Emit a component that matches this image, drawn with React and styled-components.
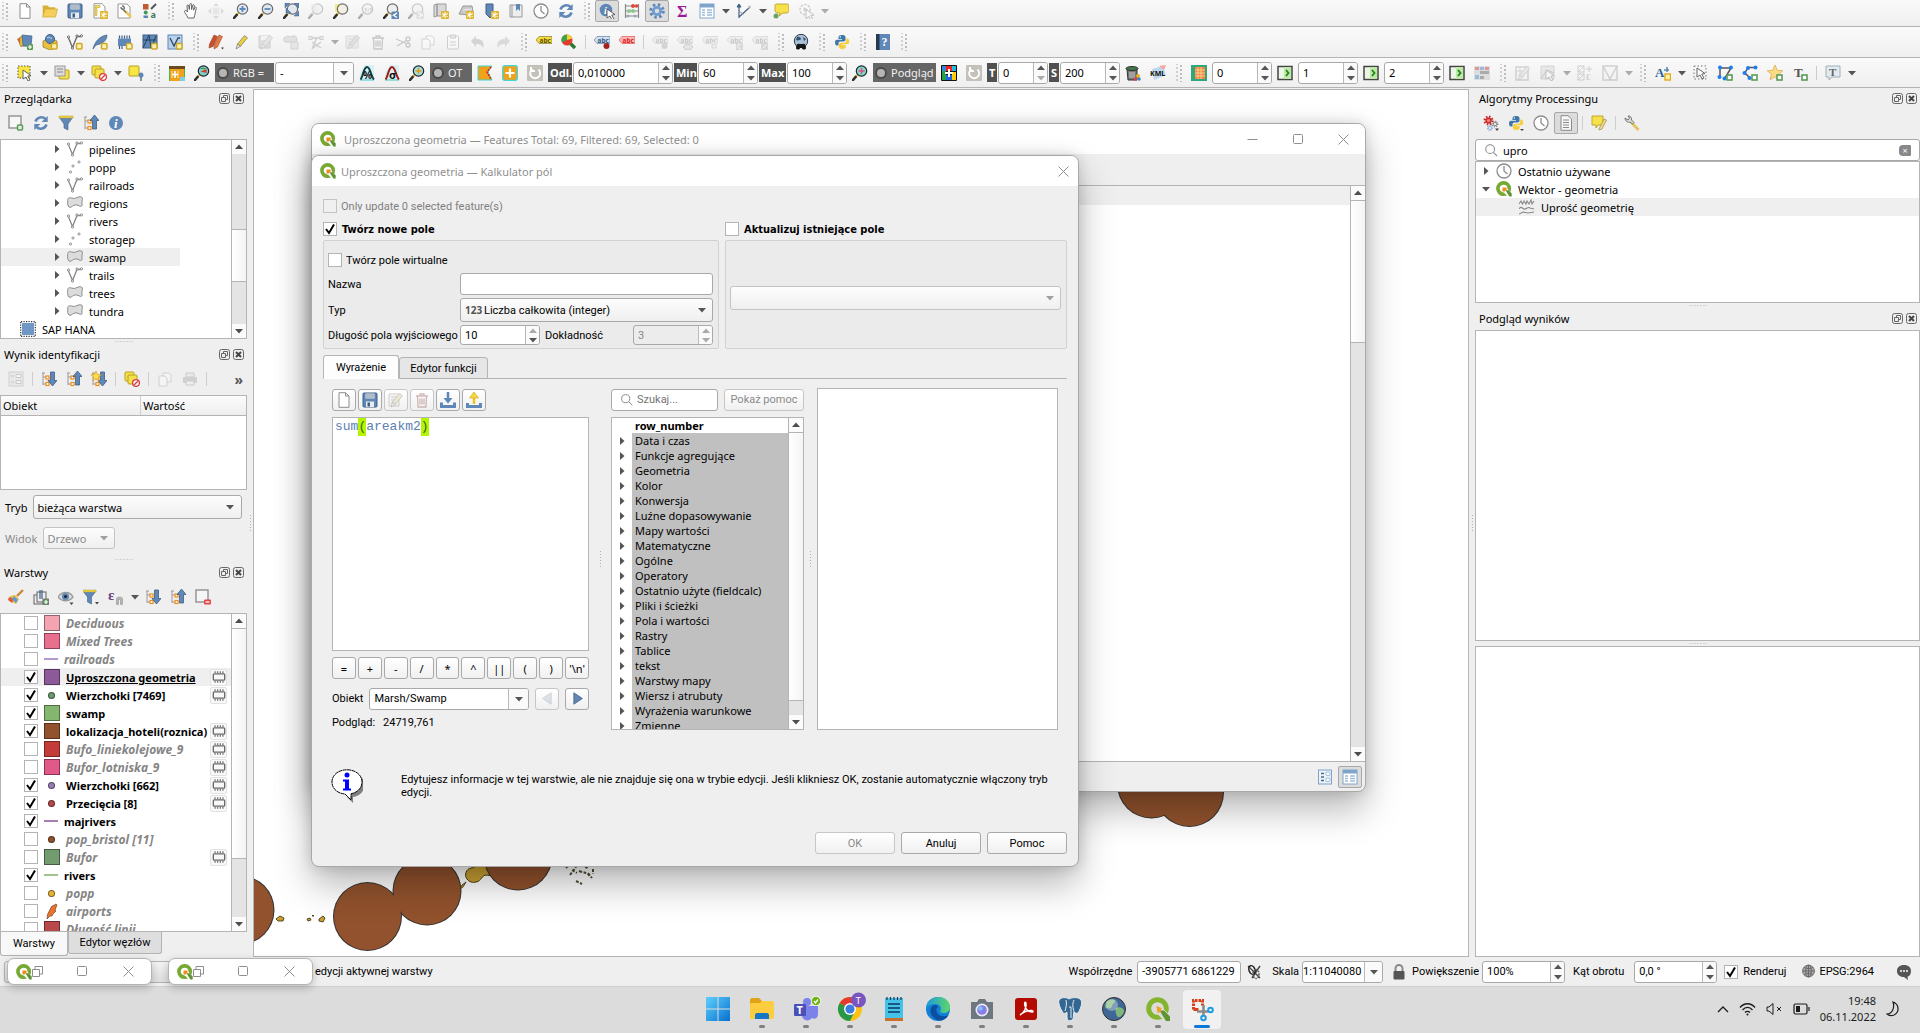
import React from "react";
import styled, { createGlobalStyle, css } from "styled-components";

/* ---------- shared values ---------- */
const UI = `"Noto Sans", "Open Sans", sans-serif`;
const DLG = `Roboto, "Noto Sans", sans-serif`;
const LINE = "#b4b4b4";
const FACE = "#efefef";

const Global = createGlobalStyle`
  *, *::before, *::after { box-sizing: border-box; }
  body { margin: 0; background: #dcdcdc; }
  button, input, select, textarea { font: inherit; color: inherit; margin: 0; }
  button { padding: 0; }
  svg { display: block; flex: none; }
`;

/* ---------- 16 px icon drawings ---------- */
const B = "#5f88b8";
const BD = "#3f5f85";
const PlusBadge = ({ x = 10, y = 10 }) => (
  <g transform={`translate(${x} ${y})`}>
    <rect x="0" y="0" width="6" height="6" rx="1" fill="#5b9b57" />
    <path d="M3 1v4M1 3h4" stroke="#fff" strokeWidth="1.2" />
  </g>
);
const StarBadge = ({ x = 8, y = 8 }) => (
  <g transform={`translate(${x} ${y})`}>
    <rect width="8" height="8" rx="1" fill="#dfb72c" />
    <path d="M4 1v6M1.300 2.500l5.400 3M6.700 2.500L1.300 5.500" stroke="#fff" strokeWidth="1.100" />
  </g>
);
const BoxBadge = () => <rect x="9.5" y="9.5" width="5.500" height="5.500" rx="1" fill="#fdf3b0" stroke="#cfa62a" strokeWidth="1.500" />;
const Glass = ({ fill = "#eef1f3", ring = "#6d6d6d", children }) => (
  <g>
    <path d="M6 9.5L2.500 13" stroke="#e3c04a" strokeWidth="2.400" />
    <path d="M3.600 12L1 15" stroke="#2f2f2f" strokeWidth="2.600" strokeLinecap="round" />
    <circle cx="9.500" cy="6" r="5.200" fill={fill} stroke={ring} strokeWidth="1.200" />
    {children}
  </g>
);
const Pages = ({ fill = "#fff" }) => (
  <g fill={fill} stroke="#999" strokeWidth="1">
    <path d="M6 2h6l2 2v7H6z" />
    <path d="M2 5h6l2 2v8H2z" />
  </g>
);
const Abc = ({ fill, color = "#333" }) => (
  <g>
    <path d="M0 6l3-3.500h13v7H3z" fill={fill} stroke={color} strokeWidth=".5" />
    <text x="3.500" y="8.600" fontFamily="Noto Sans" fontSize="6.500" fontWeight="700" fill={color}>abc</text>
  </g>
);
const TreeLines = () => (
  <g>
    <path d="M1 2h3M2 2v12M2 6h4M2 13h4" stroke="#999" fill="none" />
    <rect x="5" y="5" width="3" height="3" fill="#fff" stroke="#f08c1a" strokeWidth="1.2" />
    <rect x="5" y="11.500" width="3" height="3" fill="#fff" stroke="#f08c1a" strokeWidth="1.2" />
  </g>
);
const VLine = ({ c = "#888" }) => (
  <g fill="#fff" stroke={c} strokeWidth="1">
    <path d="M1.500 4l4 9.500L10 2.500h4" fill="none" strokeWidth="1.300" />
    <circle cx="1.500" cy="3" r="1.100" />
    <circle cx="5.500" cy="14" r="1.100" />
    <circle cx="10" cy="2" r="1.100" />
    <circle cx="14.500" cy="1.800" r="1.100" />
  </g>
);
const Poly = () => <path d="M.7 5.500C.7 2.500 2.500 2.300 4.500 3c2 .7 3.500.5 5.500-.5 2.200-1 5-1.200 5.300.5.300 2-.8 4-.3 6.500.4 2-1 2.300-2.500 1.500C10.500 10 8.500 9.300 6.500 10.500c-1.500.9-3 2.500-4.500 1.500C.3 10.700.7 8 .7 5.500z" fill="#dcdcdc" stroke="#8a8a8a" />;
const Chip = ({ c = "#666" }) => (
  <g stroke={c} fill="none">
    <rect x="1.500" y="4.500" width="13" height="7" rx="1" strokeWidth="1.500" />
    <path d="M3.500 1.500v2M6.500 1.500v2M9.500 1.500v2M12.500 1.500v2M3.500 12.500v2M6.500 12.500v2M9.500 12.500v2M12.500 12.500v2" strokeWidth="1.300" />
  </g>
);
const Gear = ({ cx, cy, r, fill, hole = "#fff" }) => (
  <g>
    <circle cx={cx} cy={cy} r={r} fill="none" stroke={fill} strokeWidth={r * 0.65} strokeDasharray={`${r * 0.4} ${r * 0.385}`} />
    <circle cx={cx} cy={cy} r={r * 0.62} fill={hole} stroke={fill} strokeWidth={r * 0.4} />
  </g>
);
const Python = () => (
  <g>
    <path d="M8 1c-3 0-3.500 1-3.500 2.500V5H8v.7H3C1.500 5.700 1 7 1 8.500s.5 3 2 3h1.500V9.500C4.500 8 5.500 7.500 7 7.500h2.500c1 0 2-.5 2-1.700V3.300C11.500 1.500 10 1 8 1z" fill="#3f78a8" />
    <path d="M8.200 15c3 0 3.500-1 3.500-2.500V11H8.200v-.7h5c1.500 0 2-1.300 2-2.800s-.5-3-2-3h-1V6.800c0 1.300-1 2-2.200 2H7.200c-1.200 0-2.200.7-2.200 1.700v2.200C5 14.500 6.200 15 8.200 15z" fill="#f6cf3e" />
    <circle cx="6.300" cy="3" r=".7" fill="#fff" />
  </g>
);
const Globe = ({ fill = "#bcd0e4", s = "#40566e" }) => (
  <g fill="none" stroke={s}>
    <circle cx="8" cy="7.500" r="6.300" fill={fill} />
    <path d="M2 7.500h12M8 1.200v12.600M3.500 3.800c3 1.600 6 1.600 9 0M3.500 11.200c3-1.600 6-1.600 9 0" />
    <ellipse cx="8" cy="7.500" rx="3" ry="6.300" />
  </g>
);
const Qgis = () => (
  <g>
    <circle cx="7.600" cy="7.600" r="5.700" fill="none" stroke="#76a832" strokeWidth="3.600" />
    <path d="M8.500 8.500l6.500 6.800" stroke="#fff" strokeWidth="5" />
    <path d="M9.500 9.200h3.200l3 3.200v3.100h-2.300z" fill="#5f9430" />
    <path d="M6.500 6.500h4v2L8.800 10.400H6.500z" fill="#f08a1f" />
  </g>
);
const Arrow = ({ up, x = 8 }) => (
  <path
    transform={`translate(${x} 0)`}
    d={up ? "M3.500 0L8 5.500H5.500V14h-4V5.500H-1z" : "M3.500 15L8 9.500H5.500V1h-4v8.500H-1z"}
    fill={B} stroke={BD} strokeWidth=".8"
  />
);
const Nodes = ({ pts }) => pts.map(([x, y], i) => <circle key={i} cx={x} cy={y} r="2" fill="#1f7df0" />);
const GreenPlus = () => <rect x="10" y="10" width="5" height="5" fill="#fff" stroke="#5b9b57" strokeWidth="1.600" />;
const Cursor = ({ x = 6, y = 5 }) => <path transform={`translate(${x} ${y})`} d="M0 0l8 5.500-3.300.6L7 10l-2 1-2-4L0 9z" fill="#fff" stroke="#555" strokeWidth=".9" />;
const Curve = ({ c, children }) => (
  <g fill="none">
    <path d="M1 15V8l5-8h9v15z" fill="#c9f0f0" opacity=".7" />
    <path d="M1 15h14" stroke="#7fd6d6" strokeWidth="1.500" />
    <path d="M1.500 14.500C4 12 4.500 2 8 2s4 10 7 12.500" stroke={c} strokeWidth="2" />
    {children}
  </g>
);
const Pencil = ({ c = "#e8cf3a", s = "#777" }) => (
  <g>
    <path d="M4.500 10L11.500 1.500l3 2.300L7.500 12.300z" fill={c} stroke={s} strokeWidth=".7" />
    <path d="M4.500 10l3 2.300L3 15z" fill="#eee0c0" stroke={s} strokeWidth=".7" />
  </g>
);

const ICONS = {
  page: <path d="M3 .7h6.500L13 4v11.300H3zM9.500.7V4H13" fill="#fff" stroke="#8d8d8d" />,
  folder: <g><path d="M.7 13V2.500h5l1.500 1.800h6V13z" fill="#d9b13a" /><path d="M.7 14L3 6h12.500l-2 8z" fill="#f5cf5a" stroke="#cfa42c" strokeWidth=".7" /></g>,
  save: <g><rect x="1" y="1" width="14" height="14" rx="1" fill={B} stroke={BD} /><rect x="3.500" y="1.500" width="9" height="5" fill="#d9dfe6" /><path d="M4 3h8M4 5h8" stroke="#8b98a8" /><rect x="4" y="9.500" width="8" height="5.500" fill="#e8ecef" /><rect x="5.500" y="10.500" width="2.500" height="4" fill={BD} /></g>,
  printNew: <g><path d="M2 .7h8L13 4v11H2z" fill="#fff" stroke="#999" /><path d="M3 2.500h5v2H3zM3 5.500h2v7H3z" fill="#f1d75c" stroke="#c7a72c" strokeWidth=".6" /><StarBadge /></g>,
  layouts: <g><path d="M1 1h9l3 3v11H1z" fill="#fff" stroke="#999" /><path d="M8 8l6 6" stroke="#e8c95a" strokeWidth="2.500" /><path d="M5 5.500l4 4M4 4c0 2 2 3 3 2s0-3-2-3" stroke="#777" strokeWidth="1.500" fill="none" /></g>,
  styles: <g><rect x="1" y="1" width="5.500" height="5.500" fill="#c05b33" /><circle cx="3.700" cy="9.500" r="2" fill="#3f9a57" /><path d="M9 6l5-5" stroke="#555" strokeWidth="2" /><path d="M1.500 12.500h4.500V15h-4.500z" fill="#5d85b5" /><text x="8.500" y="14.500" fontFamily="Noto Sans" fontWeight="700" fontSize="9" fill="#3f7a50">a</text></g>,
  hand: <path d="M5 15c-1-3-3.500-5-3.500-6.500S3.500 7 4.500 9L4 3c0-1.500 1.600-1.500 1.800 0l.5 3.500L6.800 1.500c.2-1.500 1.700-1.500 1.800 0v5l1-4c.4-1.300 1.900-1 1.700.4l-.8 4.300 1.300-2.500c.6-1.100 2-.4 1.500.8-.9 2.500-1.300 6-2.300 9.500z" fill="#fff" stroke="#555" strokeWidth=".9" />,
  panSel: <g fill="#aaa"><path d="M8 0l3 3H5zM8 16l3-3H5zM0 8l3-3v6zM16 8l-3-3v6z" /><rect x="4.500" y="4.500" width="7" height="7" fill="#ddd28a" /></g>,
  zoomIn: <Glass fill="#dfe8f3"><path d="M9.500 3v6M6.500 6h6" stroke={B} strokeWidth="1.800" /></Glass>,
  zoomOut: <Glass fill="#dfe8f3"><path d="M6.500 6h6" stroke={B} strokeWidth="1.800" /></Glass>,
  zoomFull: <g><Glass fill="#dfe8f3" /><path d="M2 0h5L2 5zM16 0h-5l5 5zM16 13h-5l5-5zM3 10V5l5 5z" fill={B} stroke={BD} strokeWidth=".5" /></g>,
  zoomSel: <g><Glass fill="#efe9b8" /><path d="M3 1h6v7H3z" fill="#e8dd80" opacity=".6" /></g>,
  zoomLayer: <g><path d="M2 1h6v8H2z" fill="#f4e98a" /><Glass fill="#f3efe2" /></g>,
  zoomNative: <Glass fill="#eee"><text x="6" y="8.500" fontSize="6" fontFamily="Noto Sans" fontWeight="700" fill="#777">1:1</text></Glass>,
  zoomLast: <g><Glass fill="#eee" /><rect x="8.500" y="8.500" width="7.500" height="7.500" fill={B} /><path d="M14 10l-3.500 2.300L14 14.500" stroke="#fff" fill="none" strokeWidth="1.400" /></g>,
  zoomNext: <g><Glass fill="#eee" /><rect x="8.500" y="8.500" width="7.500" height="7.500" fill="#bbb" /><path d="M10.500 10l3.500 2.300-3.500 2.200" stroke="#fff" fill="none" strokeWidth="1.400" /></g>,
  mapNew: <g><path d="M1 2l3-1v12l-3 1zM4 1h9v12H4z" fill="#d9d9d9" stroke="#999" /><StarBadge /></g>,
  map3d: <g><path d="M1 11L5 3h9l1 6-4 3z" fill="#c9c9c9" stroke="#999" /><path d="M5 7l9-1" stroke="#eee" /><StarBadge /></g>,
  bookNew: <g><path d="M3 1h7v10l-3 4-4-4z" fill={B} stroke={BD} /><StarBadge /></g>,
  book: <g><path d="M2 2h12v12H2z" fill="#eee" stroke="#999" /><path d="M8 1h4v7l-2-2-2 2z" fill={B} /><path d="M4 2v12" stroke="#999" /></g>,
  clock: <g><circle cx="8" cy="8" r="7" fill="#fff" stroke="#8d8d8d" strokeWidth="1.300" /><path d="M8 3v5l3.500 3" fill="none" stroke="#8d8d8d" strokeWidth="1.300" /></g>,
  refresh: <g fill="none" stroke={B} strokeWidth="2.600"><path d="M2.500 6.500c1.500-4.500 7-5.500 10-2.500" /><path d="M13.500 9.500c-1.500 4.500-7 5.500-10 2.500" /><path d="M14.700 1v6H8.500zM1.300 15V9h6.200z" fill={B} stroke="none" /></g>,
  identify: <g><circle cx="7" cy="7" r="6.300" fill={B} /><text x="5" y="11" fontFamily="Liberation Serif" fontStyle="italic" fontWeight="700" fontSize="11" fill="#fff">i</text><Cursor x={8} y={6} /></g>,
  abacus: <g stroke="#888"><path d="M1.500 1v14M14.500 1v14M1.500 3h13M1.500 8h13M1.500 13h13" strokeWidth="1.200" /><g stroke="none"><circle cx="9" cy="3" r="2" fill="#dc4b3e" /><circle cx="12.500" cy="3" r="1.800" fill="#dc4b3e" /><circle cx="5" cy="8" r="2" fill="#8cc88f" /><circle cx="9" cy="8" r="2" fill="#8cc88f" /><circle cx="4" cy="13" r="1.500" fill="#9ab" /><circle cx="11" cy="13" r="1.500" fill="#9ab" /></g></g>,
  gear: <g><circle cx="8" cy="8" r="6.300" fill="none" stroke={B} strokeWidth="3" strokeDasharray="2.500 2.450" /><circle cx="8" cy="8" r="3.700" fill="#dcdcdc" stroke="#6f9bd0" strokeWidth="2.800" /></g>,
  sigma: <text x="3" y="13.500" fontFamily="Liberation Serif" fontWeight="700" fontSize="16" fill="#9a1a9a">Σ</text>,
  table: <g><rect x="1" y="1" width="14" height="14" fill="#fff" stroke="#7ea4cc" /><path d="M1 1h14v3.500H1z" fill="#7ea4cc" /><path d="M3 7h3M8 7h5M3 9.500h3M8 9.500h5M3 12h3M8 12h5" stroke="#9fbcd8" strokeWidth="1.400" /></g>,
  form: <g><rect x="1.500" y="1" width="13" height="14" fill="#eaf2fa" stroke="#7ea4cc" /><path d="M4 4.500h3M4 8h3M4 11.500h3" stroke="#56697e" strokeWidth="1.400" /><rect x="9" y="3" width="4" height="3.500" rx="1" fill="#fff" stroke="#9fbcd8" /><rect x="9" y="9" width="4" height="3.500" rx="1" fill="#fff" stroke="#9fbcd8" /></g>,
  measure: <g fill="none"><path d="M3 2v13M3 14l10-9" stroke={BD} strokeWidth="1.200" /><path d="M1 4l2-3 2 3z" fill={BD} stroke={BD} /><circle cx="13.500" cy="4" r="1.500" fill="#bbb" /><path d="M3 9c3 0 4 2 4 3" stroke="#999" /></g>,
  tip: <g><path d="M3 1h11c2 0 2 1 2 3v3c0 2-1 3-3 3h-3l-4 3 1-3H5C3 10 2 9 2 7V3c0-1 0-2 1-2z" fill="#f6e04c" stroke="#b49a25" strokeWidth=".8" /><circle cx="3" cy="13" r="2.500" fill="#6ba45c" /></g>,
  action: <g><circle cx="7" cy="6.500" r="5" fill="#fff" stroke="#888" strokeWidth="1.600" strokeDasharray="2.500 1.200" /><path d="M5.500 4l4.500 2.500L5.500 9z" fill="#888" /><Cursor x={8} y={6.500} /></g>,

  dsManager: <g><path d="M0 5l5-3 4 8-5 3z" fill="#d7703a" /><path d="M3 3h7v9H3z" fill="#e9c13e" stroke="#97731b" strokeWidth=".5" /><path d="M5 1l10 1-1 10H6z" fill={B} stroke={BD} strokeWidth=".7" /><PlusBadge /></g>,
  gpkg: <g><path d="M1 7l7-3 7 3v6l-7 3-7-3z" fill="#e9c13e" stroke="#97731b" strokeWidth=".7" /><circle cx="8" cy="5" r="4.500" fill={B} stroke={BD} /><path d="M5 4c2-2 3 1 5 0" stroke="#cfe0ee" fill="none" /><BoxBadge /></g>,
  vecNew: <g><VLine c="#666" /><BoxBadge /></g>,
  feather: <g><path d="M1 15C3 7 8 2 15 1c0 6-5 9-11 10z" fill={B} stroke={BD} strokeWidth=".7" /><BoxBadge /></g>,
  chipNew: <g><rect x="1" y="4.500" width="13" height="7.500" fill={B} /><path d="M2.500 1.500v3M5 1.500v3M7.500 1.500v3M10 1.500v3M12.500 1.500v3M2.500 12v3M5 12v3" stroke={BD} strokeWidth="1.200" /><BoxBadge /></g>,
  meshNew: <g><rect x="1" y="1" width="14" height="13" fill={B} stroke={BD} /><path d="M1 14L7 1l2 13L14 2M1 6h13" stroke="#24405f" fill="none" /><BoxBadge /></g>,
  vBox: <g><rect x="1" y="1" width="14" height="14" fill="#b9d2ec" stroke={B} /><path d="M3 4l4 8 4-8h2" stroke="#33475c" fill="none" strokeWidth="1.300" /><BoxBadge /></g>,
  pencils: <g><path d="M1.500 10L6 1l3.500 1.500L5 12.500 1 14z" fill="#c94f32" stroke="#8a3a1a" strokeWidth=".5" /><path d="M6 11l5-10 3.500 1.500L9.500 13 6 15z" fill="#e07b45" stroke="#8a3a1a" strokeWidth=".5" /><path d="M13 13.500h3l-1.500 2z" fill="#444" /></g>,
  pencil: <Pencil />,
  saveEdit: <g><path d="M1 2h11v12H1z" fill="#bbb" stroke="#888" /><path d="M3 2h7v4H3z" fill="#eee" /><Pencil c="#ccc" /></g>,
  polyNew: <g><path d="M1 4c4-4 6 0 9-2 4-1 5 4 3 6H3C1 8 0 6 1 4z" fill="#bbb" stroke="#888" /><path d="M8 8h7v7H8z" fill="#ccc" stroke="#999" /></g>,
  vertex: <g fill="none" stroke="#888"><path d="M1 4h12M4 15L9 3M4 8l9 6M13 8l-8 6" strokeWidth="1.500" /><rect x="1" y="2.500" width="3" height="3" fill="#ddd" /><rect x="12" y="2.500" width="3" height="3" fill="#ddd" /></g>,
  multiEdit: <g><path d="M1 2h12v12H1z" fill="#ddd" stroke="#aaa" /><path d="M3 5h7M3 8h7M3 11h5" stroke="#aaa" /><Pencil c="#bbb" /></g>,
  trash: <path d="M2 4h12M6 4V2h4v2M3.500 4l.5 11h8l.5-11M6 6.500v6M8 6.500v6M10 6.500v6" fill="none" stroke="#a06a6a" strokeWidth="1.300" />,
  cut: <g fill="none" stroke="#777" strokeWidth="1.300"><circle cx="13" cy="5" r="2" /><circle cx="13" cy="11" r="2" /><path d="M11.500 6.500L2 12M11.500 9.500L1 5" /></g>,
  copy: <Pages />,
  paste: <g fill="#fff" stroke="#888"><rect x="2.500" y="2" width="11" height="13" rx="1" /><path d="M5.500 1h5v3h-5z" fill="#ccc" /><path d="M5 8h6M5 11h6" /></g>,
  undo: <path d="M1 7l5-5v3c6 0 9 3 7 9-1-3-3-4-7-4v3z" fill="#999" />,
  redo: <path d="M15 7l-5-5v3c-6 0-9 3-7 9 1-3 3-4 7-4v3z" fill="#aaa" />,
  abcYellow: <Abc fill="#f3dd3c" color="#5f520a" />,
  abcPie: <g><path d="M9 9l5 5" stroke="#2a7a35" strokeWidth="3.500" /><circle cx="6" cy="6" r="5.500" fill="#e33b2c" /><path d="M6 6V.5A5.500 5.500 0 0 0 1 8.500z" fill="#3aa44b" /><path d="M6 6V.5a5.500 5.500 0 0 1 5.300 4z" fill="#efd52f" /></g>,
  abcPin: <g><Abc fill="#cfe0f2" color="#36587e" /><circle cx="12.500" cy="12" r="3" fill="#a3231f" /></g>,
  abcRed: <Abc fill="#f7b7b7" color="#e02020" />,
  abcGrayPin: <g><Abc fill="#ddd" color="#777" /><circle cx="12.500" cy="12" r="3" fill="#999" /></g>,
  abcEye: <g><Abc fill="#ddd" color="#777" /><ellipse cx="11" cy="13" rx="4.500" ry="2.500" fill="#ccc" stroke="#888" /></g>,
  abcMove: <g><Abc fill="#ddd" color="#777" /><path d="M9 9h6v6H9zM10 12h4M12 10v4" fill="#aaa" stroke="#eee" /></g>,
  abcRot: <g><Abc fill="#ddd" color="#777" /><rect x="9" y="9" width="7" height="7" fill="#aaa" /><path d="M14 11a2 2 0 1 0 0 3" stroke="#fff" fill="none" /></g>,
  abcEdit: <g><Abc fill="#ddd" color="#777" /><rect x="9" y="9" width="7" height="7" fill="#aaa" /><path d="M10.500 14.500l4-4" stroke="#fff" /></g>,
  globeFind: <g><circle cx="8" cy="7" r="6.700" fill="#a9bfd4" stroke="#2e3c4c" /><path d="M4 3c2-1 4 1 4 2S4 7 3 6zM10 3l3 2-2 2z" fill="#33516f" /><path d="M3 14c0-4 2-5 3.500-4h3C11 9 13 10 13 14c0 2-4 2-4 0H7c0 2-4 2-4 0z" fill="#151515" /></g>,
  python: <Python />,
  help: <g><rect x="1" y="0" width="14" height="16" fill={B} /><path d="M1 0h3.500v16H1z" fill="#26384e" /><text x="6.500" y="12" fontFamily="Liberation Serif" fontWeight="700" fontSize="12" fill="#fff">?</text></g>,

  selArea: <g><rect x="1" y="1" width="12" height="12" fill="#f8e645" stroke="#555" strokeDasharray="1.500 1.500" /><Cursor x={6} y={5} /></g>,
  selForm: <g><rect x="5" y="5" width="10" height="9" rx="1" fill="#f4e04a" stroke="#b8a020" /><rect x="1" y="1" width="10" height="10" fill="#ddd" stroke="#999" /><path d="M3 4h6M3 7h6" stroke="#888" /></g>,
  deselect: <g><rect x="1" y="1" width="9" height="9" rx="1" fill="#f4e04a" stroke="#b8a020" /><rect x="4" y="4" width="9" height="9" rx="1" fill="#f4e04a" stroke="#b8a020" /><circle cx="12" cy="12" r="3.400" fill="#fff" stroke="#dc3b3b" strokeWidth="1.300" /><path d="M10 14l4-4" stroke="#dc3b3b" strokeWidth="1.300" /></g>,
  selPin: <g><rect x="1" y="1" width="10" height="10" rx="1" fill="#f8e645" stroke="#b8a020" /><circle cx="13" cy="10" r="2.500" fill={B} /><path d="M13 12v4" stroke={BD} strokeWidth="1.300" /></g>,
  scpBand: <g><rect x="0" y="2" width="16" height="14" fill="#49b34a" /><path d="M0 1h16v3H0z" fill="#6a4a20" /><path d="M1 4h14v9l-3 1v2H1z" fill="#efa21a" /><path d="M11 12h5v4h-5z" fill="#7ad0e8" /><path d="M6 6v7M3 9.500h6" stroke="#fff" strokeWidth="1.600" /><path d="M3 6v7M9 6v7" stroke="#fff" strokeWidth=".7" /></g>,
  scpZoom: <Glass fill="#7cd0c8" ring="#223"><path d="M6 4c2-2 5-1 7 0z" fill="#3a9a4a" /><path d="M6.500 6.500l6-2.500v4z" fill="#d83a2b" /></Glass>,
  curvePct: <Curve c="#12414a"><text x="4" y="14" fontFamily="Noto Sans" fontWeight="700" fontSize="10" fill="#111">%</text></Curve>,
  curveSig: <Curve c="#a31a1a"><text x="5" y="14" fontFamily="Noto Sans" fontWeight="700" fontSize="11" fill="#111">σ</text></Curve>,
  scpZoomPlus: <Glass fill="#9fe0e0" ring="#223"><path d="M9.500 3v6M6.500 6h6" stroke="#e79a1a" strokeWidth="1.600" /></Glass>,
  roiPoly: <g><path d="M1 1h14l-4 6 4 8H1z" fill="#efa21a" stroke="#3fd6d6" /><path d="M14 2l-4 5 4 7" stroke="#d22" strokeWidth="1.600" fill="none" strokeDasharray="2 1" /></g>,
  roiPlus: <g><rect x=".7" y=".7" width="14.600" height="14.600" rx="2" fill="#efa21a" stroke="#3fd6d6" strokeWidth="1.300" /><path d="M8 3.500v9M3.500 8h9" stroke="#fff" strokeWidth="2.200" /></g>,
  redoBox: <g><rect width="16" height="16" rx="1" fill="#c4c1bb" /><path d="M11.500 4.500a5 5 0 1 1-6-.5M4 2v4h4" stroke="#fff" strokeWidth="1.900" fill="none" /></g>,
  pvZoom: <Glass fill="#7fd9c0" ring="#223"><path d="M9.500 3v6M6.500 6h6" stroke="#e04d8a" strokeWidth="1.400" /></Glass>,
  pvCross: <g><rect width="16" height="16" rx="1" fill="#111" /><rect x="1" y="1" width="4" height="14" fill="#25a04a" /><rect x="1" y="1" width="4" height="5" fill="#38d" /><rect x="5" y="1" width="6" height="5" fill="#e22" /><rect x="11" y="1" width="4" height="5" fill="#2bd" /><rect x="5" y="10" width="6" height="5" fill="#26d" /><rect x="11" y="7" width="4" height="8" fill="#fc0" /><path d="M8 4v8M4 8h8" stroke="#fff" strokeWidth="2" /></g>,
  bin: <g><path d="M2 4h10v11H3z" fill="#777" stroke="#333" /><ellipse cx="7" cy="3.500" rx="6" ry="2" fill="#3f7a4a" stroke="#333" /><path d="M5 7v6M7 7v6M9 7v6" stroke="#ccc" /><circle cx="13" cy="11" r="2" fill="#efb020" /><circle cx="10.500" cy="14" r="1.800" fill="#d44" /><circle cx="14" cy="14" r="1.800" fill="#38c" /></g>,
  kml: <g><path d="M2 4l11-3 3 9-12 5z" fill="#bcd8ee" /><path d="M9 1l7-1-2 5z" fill="#f2a8a0" /><text x="0" y="11" fontFamily="Noto Sans" fontWeight="700" fontSize="7" fill="#111">KML</text></g>,
  roiGrid: <g><rect width="16" height="16" fill="#2ea77a" /><path d="M4 2h10v12H4z" fill="#f4863c" /><path d="M4 5h10M4 8h10M4 11h10M7 2v12M10 2v12" stroke="#fbd9a8" strokeWidth=".8" /></g>,
  goBox: <g><rect x="1" y="1.500" width="14" height="13" fill="#eaf7e4" stroke="#444" strokeWidth="1.500" /><path d="M7 2h7v12H7z" fill="#bfe8a8" /><path d="M9 5l2.500 3L9 11" stroke="#178a17" strokeWidth="1.800" fill="none" /></g>,
  mosaic: <g><path d="M0 1h16v14H0z" fill="#ddd" /><path d="M1 2h4v3H1zM11 2h4v3h-4z" fill="#d99" /><path d="M6 2h4v3H6zM1 10h4v4H1z" fill="#9bd" /><path d="M6 6h9v3H6zM6 11h4v3H6z" fill="#aaa" /></g>,
  dig1: <g><rect x="1" y="2" width="12" height="13" fill="none" stroke="#888" strokeWidth="1.400" /><path d="M1 6h12M5 2v13" stroke="#999" /><Pencil c="#ccc" /></g>,
  dig2: <g><path d="M1 1h13v13H1z" fill="#ccc" stroke="#999" /><path d="M1 14l6-9 7 3" stroke="#777" fill="none" /><Cursor x={6} y={5} /></g>,
  dig3: <g fill="none" stroke="#888"><rect x="1" y="1" width="6" height="6" /><rect x="1" y="9" width="6" height="6" /><path d="M1 7l6-6M1 15l6-6M12 1v6M9 4h6" /><text x="9" y="15" fontSize="9" fontFamily="Liberation Serif" fontWeight="700" fill="#888" stroke="none">Ɛ</text></g>,
  dig4: <path d="M1 1h14v14H1zM1 1l7 13 7-13" fill="none" stroke="#888" strokeWidth="1.400" />,
  annText: <g><text x="0" y="12" fontFamily="Liberation Serif" fontWeight="700" fontSize="13" fill="#2f5f9a">A</text><path d="M9 5h5M12 2v5" stroke={B} strokeWidth="1.600" /><rect x="10" y="9" width="5.500" height="6" fill="#fdf3b0" stroke="#e3a81c" strokeWidth="1.400" /></g>,
  annSel: <g><rect x="2" y="1" width="12" height="13" fill="none" stroke="#777" strokeDasharray="1.500 2" /><Cursor x={5} y={3} /></g>,
  annPoly: <g><path d="M3 12L3 3h11L8 13" fill="none" stroke="#555" strokeWidth="1.500" /><Nodes pts={[[3, 2.5], [14, 2.5], [2.5, 12], [7.5, 13.5]]} /><GreenPlus /></g>,
  annLine: <g><path d="M13 2.500L6 2.500 3 8l5 5" fill="none" stroke="#555" strokeWidth="1.500" /><Nodes pts={[[13.5, 2.5], [6, 3], [2.5, 8], [7.5, 13]]} /><GreenPlus /></g>,
  annStar: <g><path d="M8 0l2.200 5.300 5.600.4-4.300 3.600 1.400 5.500L8 11.800l-4.900 3 1.400-5.500L.2 5.700l5.600-.4z" fill="#fbdc86" stroke="#e0a94a" strokeWidth=".8" /><GreenPlus /></g>,
  annT: <g><text x="2" y="12" fontFamily="Liberation Serif" fontWeight="700" fontSize="13" fill="#555">T</text><GreenPlus /></g>,
  annBubble: <g><path d="M1 1h14v11H7l-3 3v-3H1z" fill="#e3ebf0" stroke="#9fb0ba" /><text x="4" y="10.500" fontFamily="Liberation Serif" fontWeight="700" fontSize="11" fill="#666">T</text></g>,

  addLayer: <g><rect x="1" y="1" width="12" height="12" fill="#f6f6f6" stroke="#888" strokeWidth="1.300" /><rect x="9.500" y="10" width="5" height="5" rx="1" fill="#dfeedd" stroke="#5b9b57" strokeWidth="1.500" /></g>,
  filter: <g><path d="M1 2h14L10 9v6l-4-2V9z" fill={B} stroke={BD} strokeWidth=".6" /><path d="M1 1h14v2H1z" fill="#efd546" stroke="#b69e25" strokeWidth=".5" /></g>,
  collapse: <g><TreeLines /><Arrow up /></g>,
  expand: <g><TreeLines /><Arrow /></g>,
  expandNew: <g><TreeLines /><Arrow /><path d="M5 0l1.500 3.500 3.500.3-2.700 2.300.8 3.500L5 7.700 2 9.600l.7-3.500L0 3.800l3.500-.3z" fill="#fbe04a" stroke="#e39a1c" strokeWidth=".7" /></g>,
  info: <g><circle cx="8" cy="8" r="7" fill={B} /><text x="6" y="12.500" fontFamily="Liberation Serif" fontStyle="italic" fontWeight="700" fontSize="13" fill="#fff">i</text></g>,
  line: <VLine />,
  points: <g fill="#fff" stroke="#888" strokeWidth=".9"><circle cx="3.500" cy="13" r="1.100" /><circle cx="6" cy="7" r="1.100" /><circle cx="12" cy="3" r="1.100" /></g>,
  poly: <Poly />,
  sap: <g><rect x="2" y="2" width="12" height="12" fill="#6f98c6" /><path d="M1 .7h14.500M1 15.300h14.500M.7 1v14.500M15.300 1v14.500" stroke="#333" strokeWidth="1.200" strokeDasharray="1.200 1.300" /></g>,
  formView: <g><rect x="1" y="1" width="14" height="14" fill="#ddd" stroke="#999" /><path d="M3 5h3M3 11h3" stroke="#777" /><path d="M8 3.500h5v3H8zM8 9.500h5v3H8z" fill="#fff" stroke="#888" /></g>,
  print: <g><path d="M4 2h8v4H4z" fill="#ddd" stroke="#888" /><rect x="1" y="6" width="14" height="6" rx="1" fill="#999" /><path d="M4 10h8v4H4z" fill="#eee" stroke="#888" /></g>,
  brush: <g><path d="M9 7l6-6" stroke="#c98a3a" strokeWidth="2.400" /><path d="M2 7l5-1 4 4-3 5-6-3z" fill="#e9c13e" /><path d="M1 8l5 2-2 4-4-3z" fill="#e05a3a" /><path d="M6 7l4 4-2 3-4-4z" fill="#5f9ad6" /></g>,
  addGroup: <g fill="none" stroke="#777" strokeWidth="1.200"><rect x="1" y="6" width="9" height="9" /><rect x="4" y="3" width="9" height="10" fill="#eee" /><path d="M7 1v9M9 1v9" stroke={BD} /><PlusBadge /></g>,
  eye: <g><path d="M0 8c4-6 12-6 15 0-4 5-11 5-15 0z" fill="#ddd" stroke="#999" strokeWidth="1.300" /><circle cx="7.500" cy="7.500" r="3.600" fill={B} /><circle cx="7.500" cy="7.500" r="1.600" fill="#223" /><path d="M11.500 13.500h4l-2 2.500z" fill="#444" /></g>,
  filterMenu: <g><path d="M0 2h13L8.500 8v7l-4-2V8z" fill={B} stroke={BD} strokeWidth=".6" /><path d="M0 1h13v2H0z" fill="#efd546" stroke="#b69e25" strokeWidth=".5" /><path d="M12 13h4l-2 2.500z" fill="#444" /></g>,
  epsilon: <g><text x="0" y="11" fontFamily="Liberation Serif" fontWeight="700" fontSize="15" fill="#6b3f7a">ε</text><path d="M8.500 15.500V9.500q0-1.500 3-1.500t3 1.500v6h-2v-5h-2v5z" fill="#b5b5b5" stroke="#888" strokeWidth=".5" /></g>,
  removeLayer: <g><rect x="1" y="1" width="12" height="12" fill="#f6f6f6" stroke="#888" strokeWidth="1.300" /><rect x="9" y="10.500" width="7" height="5" rx="1" fill="#e04848" /><path d="M10.500 13h4" stroke="#fff" strokeWidth="1.300" /></g>,
  models: <g><Gear cx={5.5} cy={5.5} r={3.8} fill="#cf2b2b" hole="#e88" /><Gear cx={12} cy={9} r={2.6} fill="#8a8a8a" /><Gear cx={7} cy={13} r={2.4} fill="#8fb2dd" /><path d="M12 13.500h4l-2 2.500z" fill="#444" /></g>,
  pyMenu: <g><Python /><path d="M12 14h4l-2 2z" fill="#444" /></g>,
  doc: <g><path d="M3 .7h7L13.500 4v11.300H3z" fill="#f8f8f8" stroke="#888" /><path d="M5 5h6M5 7.500h6M5 10h6M5 12.500h6" stroke="#888" strokeWidth="1.200" /></g>,
  editNote: <g><path d="M1 1h11v9H7l-2 3v-3H1z" fill="#f6e04c" stroke="#c0a628" /><path d="M8 14l5-10 2.500 1-4.500 9-3 1z" fill="#efd98a" stroke="#8a7a3a" strokeWidth=".6" /></g>,
  wrench: <g><path d="M7 7l7.500 8" stroke="#e6c25a" strokeWidth="2.800" /><path d="M1 3c0 3 3 5 5 4l2.500 2L10 7.500 7.500 5C8 3 6.500.500 4 1l1.500 2L4 5z" fill="#ddd" stroke="#666" strokeWidth=".9" /></g>,
  simplify: <g fill="none" stroke="#888" strokeWidth="1.100"><path d="M0 5l2-3 1.500 3L5 2l2 3 1-3 2 3 2-4 1 4 2-3M0 10c2-3 3-1 5 0s4-3 6-1l4 1M0 15l4-2 5 1 6-1" /></g>,
  qgis: <Qgis />,
  search: <g fill="none" stroke="#8a8a8a" strokeWidth="1.200"><circle cx="7" cy="7" r="5" /><path d="M10.700 10.700L15 15" /></g>,
  download: <g><path d="M8 0v9" stroke={B} strokeWidth="2.500" /><path d="M3.500 6h9L8 11.500z" fill={B} /><path d="M0 10.500h3v2.500h10v-2.500h3V16H0z" fill={B} /></g>,
  upload: <g><path d="M8 4v8" stroke="#f0c419" strokeWidth="2.500" /><path d="M3.500 6h9L8 0z" fill="#f6d93a" stroke="#c9a21c" strokeWidth=".6" /><path d="M0 11h3v2h10v-2h3v5H0z" fill={B} /></g>,
  editDoc: <g><path d="M1 2h10v12H1z" fill="#eee" stroke="#999" /><path d="M3 5h6M3 8h5M3 11h4" stroke="#999" /><Pencil c="#ddd3a0" /></g>,
  chip: <Chip />,
  prev: <path d="M12.500 1v14L2 8z" fill="#b9c6d2" stroke="#8e9aa6" />,
  next: <path d="M3.500 1v14L14 8z" fill={B} stroke={BD} />,
  extents: <g><path d="M2 2l12 12M14 2L6 14" stroke="#444" strokeWidth="1.400" /><ellipse cx="6" cy="6" rx="3" ry="4.500" fill="none" stroke="#222" strokeWidth="1.500" transform="rotate(-20 6 6)" /><ellipse cx="10" cy="10" rx="3" ry="4.500" fill="none" stroke="#555" strokeWidth="1.500" strokeDasharray="1.500 1" /></g>,
  lock: <g><path d="M4.500 8V4.500a3.500 3.500 0 0 1 7 0V8" fill="none" stroke="#8a8a8a" strokeWidth="2" /><rect x="2.500" y="7" width="11" height="8.500" rx="1" fill="#555" /></g>,
  globe: <Globe fill="#aaa" s="#666" />,
  bubble: <g><path d="M8 1c4.500 0 7 2.500 7 6s-1.500 5-3.500 5.700L12 16l-4-3C3.500 13 1 10.500 1 7s2.500-6 7-6z" fill="#555" /><circle cx="5" cy="7" r="1" fill="#fff" /><circle cx="8" cy="7" r="1" fill="#fff" /><circle cx="11" cy="7" r="1" fill="#fff" /></g>,
  airport: <path d="M3 16l.5-4.500 4-8L12 1l1 1-2 5 1 1-3 3-1 2-2 0z" fill="#e9732a" stroke="#6a4a38" strokeWidth=".7" />,
};

const Icon = ({ name, size = 16 }) => (
  <svg width={size} height={size} viewBox="0 0 16 16" aria-hidden="true">{ICONS[name]}</svg>
);
const Tri = ({ dir = "down", size = 8 }) => {
  const d = { down: "M0 2h8L4 6.500z", up: "M0 6h8L4 1.500z", right: "M2 0v8l4.500-4z" }[dir];
  return <svg width={size} height={size} viewBox="0 0 8 8" aria-hidden="true"><path d={d} fill="currentColor" /></svg>;
};

/* ---------- controls ---------- */
const ToolBtn = styled.button`
  width: 24px;
  height: 22px;
  display: grid;
  place-items: center;
  flex: none;
  border: 1px solid ${(p) => (p.$on ? "#a8a8a8" : "transparent")};
  border-radius: 2px;
  background: ${(p) => (p.$on ? "#dcdcdc" : "transparent")};
  &:disabled svg { opacity: 0.35; filter: grayscale(1); }
`;
const MenuBtn = styled.button`
  width: 11px;
  height: 22px;
  display: grid;
  place-items: center;
  flex: none;
  border: 0;
  background: none;
  color: ${(p) => (p.disabled ? "#aaa" : "#555")};
`;
const Grip = styled.span`
  flex: none;
  width: ${(p) => (p.$first ? 12 : 15)}px;
  height: 18px;
  background: radial-gradient(circle, #bdbdbd 1px, transparent 1px) right 3px top 0 / 4px 4px repeat-y,
    radial-gradient(circle, #cfcfcf 1px, transparent 1px) right 7px top 2px / 4px 4px repeat-y;
`;
const Sep = styled.span`
  flex: none;
  width: 7px;
  height: 14px;
  background: linear-gradient(#cdcdcd, #cdcdcd) center / 1px 100% no-repeat;
`;
const DarkLabel = styled.label`
  flex: none;
  width: ${(p) => p.$w}px;
  height: 19px;
  background: #505050;
  color: #fff;
  font: 700 11px/19px ${UI};
  padding-left: 2px;
  overflow: hidden;
  white-space: nowrap;
`;
const DarkToggle = styled.button`
  flex: none;
  width: ${(p) => p.$w}px;
  height: 19px;
  display: flex;
  align-items: center;
  gap: 4px;
  padding: 0 0 0 2px;
  border: 0;
  background: #666;
  color: #f2f2f2;
  font: 11px/19px ${UI};
  &::before {
    content: "";
    flex: none;
    width: 12px;
    height: 12px;
    border-radius: 50%;
    border: 2px solid #4b4b4b;
    background: #b5b5b5;
  }
`;
const Frame = styled.span`
  flex: ${(p) => (p.$grow ? "1 1 auto" : "none")};
  width: ${(p) => (p.$w ? `${p.$w}px` : "auto")};
  height: ${(p) => p.$h || 22}px;
  display: flex;
  border: 1px solid #a9a9a9;
  border-radius: 3px;
  background: ${(p) => (p.$off ? "#ececec" : "#fff")};
  color: ${(p) => (p.$off ? "#8a8a8a" : "#000")};
  font: 11px ${(p) => (p.$dlg ? DLG : UI)};
  overflow: hidden;
`;
const Field = styled.input`
  flex: 1 1 auto;
  min-width: 0;
  width: 0;
  border: 0;
  outline: 0;
  padding: 0 ${(p) => (p.$tight ? 0 : 4)}px;
  background: transparent;
`;
const Stepper = styled.span`
  flex: none;
  width: 14px;
  display: flex;
  flex-direction: column;
  border-left: 1px solid #b9b9b9;
  background: #fafafa;
`;
const StepBtn = styled.button`
  flex: 1;
  display: grid;
  place-items: center;
  border: 0;
  background: none;
  color: ${(p) => (p.disabled ? "#aaa" : "#555")};
`;
const Spin = ({ id, label, value, upOff, downOff, ...rest }) => (
  <Frame {...rest}>
    <Field id={id} aria-label={label} defaultValue={value} disabled={rest.$off} />
    <Stepper>
      <StepBtn aria-label="+" disabled={upOff}><Tri dir="up" /></StepBtn>
      <StepBtn aria-label="-" disabled={downOff}><Tri /></StepBtn>
    </Stepper>
  </Frame>
);
const DropBtn = styled.button`
  flex: none;
  width: ${(p) => (p.$tight ? 18 : 20)}px;
  display: grid;
  place-items: center;
  border: 0;
  border-left: 1px solid #b9b9b9;
  background: #fafafa;
  color: #555;
`;
const Combo = ({ id, label, value, tight, ...rest }) => (
  <Frame {...rest}>
    <Field id={id} aria-label={label} defaultValue={value} $tight={tight} />
    <DropBtn aria-label={value} $tight={tight}><Tri /></DropBtn>
  </Frame>
);
const SelectBox = styled.span`
  flex: ${(p) => (p.$w || p.$off ? "none" : "1 1 auto")};
  width: ${(p) => (p.$w ? `${p.$w}px` : "auto")};
  height: ${(p) => p.$h}px;
  display: grid;
  align-items: center;
  border: 1px solid ${(p) => (p.$off ? "#c4c4c4" : "#a9a9a9")};
  border-radius: 3px;
  background: linear-gradient(#fdfdfd, #efefef);
  color: ${(p) => (p.$off ? "#a0a0a0" : "#555")};
  > * { grid-area: 1 / 1; }
  > svg { justify-self: end; margin-right: ${(p) => p.$caret || 6}px; pointer-events: none; }
`;
const Select = styled.select`
  width: 100%;
  height: 100%;
  appearance: none;
  border: 0;
  outline: 0;
  background: none;
  padding: 0 0 0 ${(p) => p.$pad || 3}px;
  font: 11px ${(p) => (p.$dlg ? DLG : UI)};
  color: #000;
  &:disabled { color: #8a8a8a; opacity: 1; }
`;
const TypeMark = styled.span`
  font: 700 10px ${UI};
  color: #555;
  padding-left: 4px;
  pointer-events: none;
`;
const checkMark = `url("data:image/svg+xml,%3Csvg xmlns='http://www.w3.org/2000/svg' viewBox='0 0 12 12'%3E%3Cpath d='M2 6l3 4 5-8.500' fill='none' stroke='black' stroke-width='2'/%3E%3C/svg%3E")`;
const Check = styled.input.attrs({ type: "checkbox" })`
  appearance: none;
  flex: none;
  width: 14px;
  height: 14px;
  border: 1px solid #b3b3b3;
  background: #fff;
  &:checked { background: #fff ${checkMark} center / 12px 12px no-repeat; }
  &:disabled { background-color: #f0f0f0; border-color: #c4c4c4; }
`;
const CheckLabel = styled.label`
  display: flex;
  align-items: center;
  gap: ${(p) => p.$gap || 4}px;
  height: 14px;
  white-space: nowrap;
  font: ${(p) => (p.$bold ? `700 11px "DejaVu Sans Condensed", ${UI}` : `11px ${DLG}`)};
  color: ${(p) => (p.$off ? "#7f7f7f" : "#000")};
`;
const Button = styled.button`
  width: ${(p) => p.$w}px;
  height: 22px;
  display: grid;
  place-items: center;
  flex: none;
  border: 1px solid ${(p) => (p.disabled ? "#c6c6c6" : "#a9a9a9")};
  border-radius: 3px;
  background: linear-gradient(#fff, #f0f0f0);
  font: 11px ${DLG};
  color: ${(p) => (p.disabled ? "#8a8a8a" : "#000")};
  &:disabled svg { opacity: 0.45; }
`;

/* ---------- scroll bar ---------- */
const BarBox = styled.div`
  flex: none;
  width: 15px;
  display: flex;
  flex-direction: column;
  border-left: 1px solid ${LINE};
  background: #e4e4e4;
`;
const BarBtn = styled.button`
  flex: none;
  height: 14px;
  display: grid;
  place-items: center;
  border: 0;
  background: #fbfbfb;
  color: #4d4d4d;
`;
const BarPart = styled.div`
  flex: ${(p) => p.$f} 0 0;
  ${(p) => p.$thumb && css`background: linear-gradient(90deg, #fff, #f4f4f4); border: solid ${LINE}; border-width: 1px 0;`}
`;
const ScrollBar = ({ before = 0, thumb, after = 0 }) => (
  <BarBox>
    <BarBtn aria-label="▲"><Tri dir="up" /></BarBtn>
    <BarPart $f={before} />
    <BarPart $f={thumb} $thumb />
    <BarPart $f={after} />
    <BarBtn aria-label="▼"><Tri /></BarBtn>
  </BarBox>
);

/* ---------- main window ---------- */
const Desktop = styled.div`
  position: relative;
  min-height: 100vh;
  display: flex;
  flex-direction: column;
  overflow: hidden;
  background: ${FACE};
  color: #000;
  font: 11px/15px ${UI};
`;
const ToolRow = styled.div`
  flex: none;
  height: ${(p) => p.$h}px;
  padding-bottom: ${(p) => p.$pb || 0}px;
  display: flex;
  align-items: center;
  gap: 1px;
  overflow: hidden;
  background: linear-gradient(#fafafa, #efefef);
  border-bottom: 1px solid ${LINE};
`;
const Workspace = styled.main`
  flex: 1 1 auto;
  min-height: 0;
  display: flex;
`;
const LeftCol = styled.div`
  flex: none;
  width: 247px;
  display: flex;
  flex-direction: column;
`;
const RightCol = styled.div`
  flex: none;
  width: 445px;
  display: flex;
  flex-direction: column;
`;
const VSplit = styled.div`
  flex: none;
  width: ${(p) => (p.$w ? `${p.$w}px` : "auto")};
  display: grid;
  place-items: center;
  &::before {
    content: "";
    width: 3px;
    height: 18px;
    background: radial-gradient(circle, #b0b0b0 1px, transparent 1px) 0 0 / 3px 3px;
  }
`;
const HSplit = styled.div`
  flex: none;
  height: 5px;
  background: radial-gradient(circle, #b5b5b5 1px, transparent 1px) center / 3px 3px repeat-x;
  width: 18px;
  align-self: center;
`;
const DockHead = styled.div`
  flex: none;
  height: 22px;
  display: flex;
  align-items: center;
  padding: 0 2px 1px 4px;
`;
const DockTitle = styled.h2`
  flex: 1;
  margin: 0;
  font: 11px/15px ${UI};
`;
const DockBtn = styled.button`
  width: 14px;
  height: 12px;
  display: grid;
  place-items: center;
  border: 0;
  background: none;
`;
const DockHeader = ({ title }) => (
  <DockHead>
    <DockTitle>{title}</DockTitle>
    <DockBtn aria-label="⧉">
      <svg width="11" height="11" viewBox="0 0 11 11"><g fill="none" stroke="#666"><rect x=".5" y=".5" width="10" height="10" rx="2" /><path d="M2.500 4.500h4v4h-4zM4.500 4.500v-2h4v4h-2" /></g></svg>
    </DockBtn>
    <DockBtn aria-label="×">
      <svg width="11" height="11" viewBox="0 0 11 11"><rect x=".5" y=".5" width="10" height="10" rx="2" fill="none" stroke="#666" /><path d="M3 3l5 5M8 3l-5 5" stroke="#444" strokeWidth="2" /></svg>
    </DockBtn>
  </DockHead>
);
const DockTools = styled.div`
  flex: none;
  height: 26px;
  margin-bottom: 3px;
  padding: 0 4px;
  display: flex;
  align-items: center;
  gap: 1px;
`;
const More = styled.button`
  margin-left: auto;
  border: 0;
  background: none;
  font: 700 14px ${UI};
  color: #555;
`;
const ListBox = styled.div`
  flex: ${(p) => (p.$grow ? "1 1 0" : "none")};
  min-height: ${(p) => p.$min || 0}px;
  display: flex;
  border: 1px solid ${LINE};
  background: #fff;
  overflow: hidden;
`;
const Rows = styled.ul`
  flex: 1;
  min-width: 0;
  margin: 0;
  padding: 0;
  list-style: none;
`;
const TreeRow = styled.li`
  height: 18px;
  display: flex;
  align-items: center;
  gap: 6px;
  padding-left: ${(p) => p.$indent}px;
  width: ${(p) => p.$w || "100%"};
  background: ${(p) => (p.$sel ? "#efefef" : "transparent")};
  color: #555;
  white-space: nowrap;
`;
const RowText = styled.span`
  color: #000;
`;
const IdTable = styled.table`
  width: 100%;
  border-collapse: collapse;
  align-self: flex-start;
  th {
    height: 19px;
    padding: 0 2px;
    text-align: left;
    font-weight: 400;
    background: linear-gradient(#fcfcfc, #ededed);
    border-bottom: 1px solid ${LINE};
  }
  th + th { border-left: 1px solid #cfcfcf; }
`;
const FormRow = styled.div`
  flex: none;
  display: flex;
  align-items: center;
  gap: 6px;
  padding: ${(p) => p.$pad};
  color: ${(p) => (p.$off ? "#8a8a8a" : "#000")};
`;
const LayerRow = styled.li`
  height: 18px;
  display: flex;
  align-items: center;
  gap: 6px;
  padding: 0 4px 0 23px;
  background: ${(p) => (p.$sel ? "#efefef" : "transparent")};
`;
const Swatch = styled.span`
  flex: none;
  width: 16px;
  height: 16px;
  background: ${(p) => p.$c};
  border: 1px solid rgba(0, 0, 0, 0.4);
`;
const LineSym = styled.span`
  flex: none;
  width: 14px;
  height: 2px;
  background: ${(p) => p.$c};
`;
const DotSym = styled.span`
  flex: none;
  width: 7px;
  height: 7px;
  margin: 0 5px 0 4px;
  border-radius: 50%;
  background: ${(p) => p.$c};
  border: 1px solid rgba(0, 0, 0, 0.45);
`;
const LayerName = styled.label`
  flex: 1 1 0;
  min-width: 0;
  white-space: nowrap;
  font-weight: 700;
  font-style: ${(p) => (p.$on ? "normal" : "italic")};
  font-size: ${(p) => (p.$on ? 11 : 12)}px;
  color: ${(p) => (p.$on ? "#000" : "#858585")};
  text-decoration: ${(p) => (p.$u ? "underline" : "none")};
`;
const ChipBtn = styled.button`
  flex: none;
  width: 17px;
  height: 17px;
  display: grid;
  place-items: center;
  border: 1px solid #e2e2e2;
  border-radius: 2px;
  background: #f8f8f8;
`;
const TabBar = styled.div`
  flex: none;
  height: 25px;
  display: flex;
  align-items: flex-start;
`;
const DockTab = styled.button`
  width: ${(p) => p.$w}px;
  height: ${(p) => (p.$on ? 24 : 22)}px;
  border: 1px solid ${LINE};
  border-top: 0;
  border-radius: 0 0 3px 3px;
  background: ${(p) => (p.$on ? "#f8f8f8" : "#dedede")};
  font: 11px ${DLG};
`;
const MapArea = styled.section`
  flex: 1 1 auto;
  min-width: 0;
  margin-top: 1px;
  border: 1px solid ${LINE};
  background: #fff;
  overflow: hidden;
`;
const SearchBar = styled.div`
  flex: none;
  height: 22px;
  display: flex;
  align-items: center;
  gap: 1px;
  padding: 0 8px;
  border: 1px solid #a9a9a9;
  border-radius: 3px;
  background: #fff;
`;
const ClearBtn = styled.button`
  width: 12px;
  height: 11px;
  border: 0;
  background: #888;
  border-radius: 4px 1px 1px 4px;
  color: #fff;
  font: 9px/11px ${UI};
`;

/* ---------- floating windows ---------- */
const Win = styled.section`
  position: absolute;
  left: ${(p) => p.$x}px;
  top: ${(p) => p.$y}px;
  width: ${(p) => p.$w}px;
  height: ${(p) => (p.$h ? `${p.$h}px` : "auto")};
  display: flex;
  flex-direction: column;
  border: 1px solid #a8a8a8;
  border-radius: 8px;
  overflow: hidden;
  background: ${FACE};
  box-shadow: 0 18px 36px rgba(0, 0, 0, 0.28), 0 0 14px rgba(0, 0, 0, 0.14);
`;
const TitleBar = styled.header`
  flex: none;
  height: 30px;
  display: flex;
  align-items: center;
  gap: ${(p) => p.$gap}px;
  padding: 0 5px 0 8px;
  background: #fff;
  color: #8f8f8f;
`;
const WinTitle = styled.h1`
  flex: 1;
  margin: 0;
  font: 11px/15px ${UI};
`;
const WinBtn = styled.button`
  width: ${(p) => p.$w || 46}px;
  height: 28px;
  display: grid;
  place-items: center;
  border: 0;
  background: none;
`;
const WinGlyph = ({ kind }) => (
  <svg width="11" height="11" viewBox="0 0 11 11" fill="none" stroke="#8f8f8f">
    {kind === "min" && <path d="M.5 5.500h10" />}
    {kind === "max" && <rect x=".5" y=".5" width="9" height="9" rx="1" />}
    {kind === "close" && <path d="M.5.5l10 10M10.500.5l-10 10" />}
    {kind === "restore" && <path d="M.5 3.500h7v7h-7zM3 3.500v-3h7.500V8h-3" />}
  </svg>
);
const AttrTools = styled.div`
  flex: none;
  height: 32px;
  border-bottom: 1px solid ${LINE};
`;
const AttrBody = styled.div`
  flex: 1;
  display: flex;
  min-height: 0;
  background: #fff;
`;
const AttrCells = styled.div`
  flex: 1;
  &::before { content: ""; display: block; height: 19px; background: ${FACE}; }
`;
const AttrFoot = styled.footer`
  flex: none;
  height: 30px;
  display: flex;
  justify-content: flex-end;
  align-items: center;
  gap: 1px;
  padding-right: 3px;
  border-top: 1px solid ${LINE};
`;

const DlgBody = styled.div`
  padding: 13px 11px 12px 11px;
  display: flex;
  flex-direction: column;
  font: 11px/13px ${DLG};
`;
const Groups = styled.div`
  display: grid;
  grid-template-columns: 396fr 342fr;
  gap: 6px;
  margin-top: 9px;
`;
const Group = styled.fieldset`
  display: flex;
  flex-direction: column;
  gap: 4px;
  min-width: 0;
  margin: 0;
  padding: 0;
  border: 0;
`;
const GroupBox = styled.div`
  height: 109px;
  padding: ${(p) => p.$pad};
  display: flex;
  flex-direction: column;
  border: 1px solid #d2d2d2;
  border-radius: 2px;
  background: #ebebeb;
`;
const FieldGrid = styled.div`
  margin-top: 6px;
  display: grid;
  grid-template-columns: 132px 80px 93px 1fr;
  grid-template-rows: 22px 24px 20px;
  row-gap: 3px;
  align-items: center;
`;
const Wide = styled.div`
  grid-column: 2 / -1;
  display: flex;
`;
const FieldLabel = styled.label`
  white-space: nowrap;
  padding-left: ${(p) => p.$pad || 0}px;
`;
const DlgTabs = styled.div`
  margin-top: 6px;
  height: 24px;
  display: flex;
  align-items: flex-end;
  border-bottom: 1px solid ${LINE};
`;
const DlgTab = styled.button`
  width: ${(p) => p.$w}px;
  height: ${(p) => (p.$on ? 24 : 22)}px;
  margin-bottom: -1px;
  border: 1px solid ${LINE};
  border-bottom-color: ${(p) => (p.$on ? "#fff" : LINE)};
  border-radius: 3px 3px 0 0;
  background: ${(p) => (p.$on ? "#fdfdfd" : "#e6e6e6")};
  font: 11px ${DLG};
`;
const TabPage = styled.div`
  height: 351px;
  padding: 9px 9px 0 9px;
  display: grid;
  grid-template-columns: 257fr 22px 193fr 13px 241fr;
`;
const Column = styled.div`
  display: flex;
  flex-direction: column;
  min-height: 0;
  min-width: 0;
`;
const Line = styled.div`
  flex: none;
  display: flex;
  align-items: center;
  gap: ${(p) => p.$gap}px;
  margin-top: ${(p) => p.$mt || 0}px;
  height: ${(p) => p.$h}px;
`;
const OpGrid = styled.div`
  flex: none;
  display: grid;
  grid-template-columns: repeat(10, 1fr);
  gap: 2px;
  margin-top: 6px;
`;
const OpBtn = styled(Button)`
  width: auto;
  font: 11px ${UI};
`;
const CodeBox = styled.div`
  flex: 1 1 0;
  margin-top: 6px;
  padding: 0 2px;
  border: 1px solid ${LINE};
  background: #fff;
  color: #5b7fb0;
  font: 13px/18px "Liberation Mono", monospace;
`;
const Bracket = styled.span`
  display: inline-block;
  background: #b4f600;
  color: #41602a;
`;
const SearchField = styled(Frame)`
  align-items: center;
  padding-left: 8px;
  color: #777;
`;
const FnList = styled(ListBox)`
  margin-top: 6px;
`;
const FnRow = styled.li`
  height: 15px;
  display: grid;
  grid-template-columns: 20px 1fr;
  align-items: stretch;
  color: #555;
  > svg { align-self: center; justify-self: center; }
`;
const FnName = styled.span`
  grid-column: 2;
  padding-left: 3px;
  color: #000;
  font: ${(p) => (p.$bold ? 700 : 400)} 11px/15px ${UI};
  background: ${(p) => (p.$bold ? "#fff" : "#c0c0c0")};
`;
const HelpPane = styled.div`
  border: 1px solid ${LINE};
  background: #fff;
`;
const Notice = styled.div`
  margin-top: 39px;
  padding-left: 8px;
  display: grid;
  grid-template-columns: 32px 1fr;
  column-gap: 38px;
`;
const NoticeText = styled.p`
  margin: 0;
  padding-top: 4px;
`;
const DlgButtons = styled.div`
  margin-top: 29px;
  display: flex;
  justify-content: flex-end;
  gap: 6px;
`;
const MiniWin = styled.div`
  position: absolute;
  left: ${(p) => p.$x}px;
  bottom: 48px;
  width: 145px;
  height: 27px;
  display: flex;
  align-items: center;
  padding-left: 8px;
  border: 1px solid #b4b4b4;
  border-radius: 7px;
  background: #fff;
  box-shadow: 0 3px 8px rgba(0, 0, 0, 0.22);
`;

/* ---------- status bar ---------- */
const StatusBar = styled.footer`
  flex: none;
  height: 29px;
  display: flex;
  align-items: center;
  padding: 0 8px 0 4px;
  font: 11px/15px ${DLG};
  white-space: nowrap;
`;
const LocatorBox = styled.div`
  width: 298px;
  height: 22px;
  margin-right: 13px;
  border: 1px solid ${LINE};
  border-radius: 3px;
  background: linear-gradient(#f2f2f2, #dedede);
`;
const StatusMsg = styled.span`
  flex: 1;
`;
const StatusItem = styled.div`
  display: flex;
  align-items: center;
  gap: ${(p) => p.$gap || 5}px;
  margin-left: ${(p) => p.$before || 8}px;
`;
const PlainBtn = styled.button`
  display: flex;
  align-items: center;
  gap: 3px;
  border: 0;
  background: none;
`;

/* ---------- task bar ---------- */
const TaskBar = styled.nav`
  flex: none;
  height: 47px;
  display: grid;
  grid-template-columns: 1fr auto 1fr;
  background: #dcdcdc;
  border-top: 1px solid #cfcfcf;
`;
const Apps = styled.div`
  grid-column: 2;
  display: flex;
`;
const AppBtn = styled.button`
  width: 38px;
  height: 39px;
  margin: 3px 3px 0;
  display: flex;
  flex-direction: column;
  align-items: center;
  justify-content: flex-end;
  gap: 4px;
  border: 0;
  border-radius: 4px;
  padding-bottom: 1px;
  background: ${(p) => (p.$on ? "#f1f1f1" : "transparent")};
  &::after {
    content: "";
    width: ${(p) => (p.$on ? 16 : 6)}px;
    height: 3px;
    border-radius: 2px;
    background: ${(p) => (p.$on ? "#0a78d6" : p.$idle ? "transparent" : "#808080")};
  }
`;
const Tray = styled.div`
  display: flex;
  align-items: center;
  justify-content: flex-end;
  gap: 10px;
  padding: 0 20px 3px 0;
  color: #1b1b1b;
`;
const Clock = styled.time`
  text-align: right;
  font: 11px/16px ${UI};
`;

const APPS = [
  ["Start", <g><linearGradient id="wn" x2="1" y2="1"><stop stopColor="#5fd0fb" /><stop offset="1" stopColor="#0670d0" /></linearGradient><path d="M0 0h11.500v11.500H0zM12.500 0H24v11.500H12.500zM0 12.500h11.500V24H0zM12.500 12.500H24V24H12.500z" fill="url(#wn)" /></g>],
  ["Explorer", <g><path d="M0 3c0-1 1-2 2-2h7l3 3h10v6H0z" fill="#e0a11b" /><path d="M0 7c0-1 1-1 2-1h8l2-2h10c1 0 2 1 2 2v14c0 1-1 2-2 2H0z" fill="#fccd3f" /><path d="M5 22v-4c0-1 1-2 2-2h10c1 0 2 1 2 2v4z" fill="#1577c6" /></g>],
  ["Teams", <g><circle cx="13" cy="5" r="4" fill="#7b83eb" /><path d="M8 9h16v8c0 4-3 6-6 4-3 4-10 3-10-3z" fill="#7b83eb" /><circle cx="22" cy="4" r="5" fill="#fff" /><circle cx="22" cy="4" r="4.300" fill="#6fb414" /><path d="M20 4l1.500 2L24 2.500" stroke="#fff" fill="none" strokeWidth="1.300" /><rect x="0" y="7" width="12" height="12" rx="1" fill="#4a50b8" /><text x="2.500" y="17" fontFamily="Noto Sans" fontWeight="700" fontSize="11" fill="#fff">T</text></g>],
  ["Chrome", <g><circle cx="12" cy="12" r="12" fill="#fbc116" /><path d="M12 12L1.600 6A12 12 0 0 1 22.400 6z" fill="#e33b2e" /><path d="M12 12L1.600 6A12 12 0 0 0 12 24l4-8z" fill="#279847" /><circle cx="12" cy="12" r="6" fill="#fff" /><circle cx="12" cy="12" r="4.600" fill="#3b7de0" /><circle cx="20.500" cy="3" r="7.500" fill="#7a55c0" /><text x="17.800" y="6.500" fontFamily="Noto Sans" fontSize="9" fill="#fff">T</text></g>],
  ["Notepad", <g><rect x="3" y="1" width="18" height="20" fill="#45c2e8" /><path d="M3 21h18v3H3z" fill="#c8702a" /><path d="M6 7h12M6 11h12M6 15h12" stroke="#1b5a80" strokeWidth="1.800" /><path d="M5 0v3M8.500 0v3M12 0v3M15.500 0v3M19 0v3" stroke="#235" strokeWidth="1.200" /></g>],
  ["Edge", <g><linearGradient id="eg" x2="1" y2="0"><stop stopColor="#1c9ade" /><stop offset="1" stopColor="#5fd66a" /></linearGradient><circle cx="12" cy="12" r="12" fill="#1180d6" /><path d="M0 12C0 4 6 0 12 0c8 0 12 5 12 10 0 4-3 6-6.500 6-3 0-4-1-3-2.500 1.500-3-1-6.500-5-6.500C5 7 1 9 0 12z" fill="url(#eg)" /><path d="M9.500 8C5 8 3.500 13 5 17c1.500 4 6 7 10 6.500 3-.5 6-2.500 7.500-5.500-5 2.500-11 1-12-4-.3-2 .5-3.500 1.500-4.500C11.500 8.500 10.500 8 9.500 8z" fill="#0b4fa0" /></g>],
  ["Camera", <g><path d="M1 5h6l2-3h6l2 3h6v17H1z" fill="#6e7780" /><circle cx="12" cy="13" r="6.500" fill="#e9edf2" /><circle cx="12" cy="13" r="4.800" fill="#8a7be8" /><circle cx="10.500" cy="11.500" r="2.200" fill="#7fc4f4" /></g>],
  ["Acrobat", <g><rect x="1" y="1" width="22" height="22" rx="3" fill="#b30b00" /><path d="M6 18c4-2 7-8 6-12-1-2-2 0-1 3 1 4 4 6 7 6 2 0 1-2-2-1.500-4 .5-7 1.500-10 4.500z" fill="none" stroke="#fff" strokeWidth="1.400" /></g>],
  ["PostgreSQL", <g><path d="M1 3c2-3 7-3 10-1 4-2 10-2 12 1s-1 10-3 13c-1 1-3 0-4-1-1 3 0 7-2 8-3 2-5 0-5-3v-5c-2 2-4 2-5-1C2 11 0 6 1 3z" fill="#336791" stroke="#e8eef4" /><path d="M8 3c1 4 0 8-1 11M16 3c-2 4-1 8 0 12M11 10h2v11" stroke="#e8eef4" fill="none" /></g>],
  ["Globe", <g><circle cx="12" cy="12" r="11.500" fill="#3f6796" stroke="#333" /><path d="M4 5c4-4 9-3 9-1s-3 3-3 5-5 4-7 1zM14 11c3-2 8 0 8 3s-4 7-6 6-3-7-2-9z" fill="#7fb77a" /><circle cx="10" cy="8" r="6" fill="#fff" opacity=".35" /></g>],
  ["QGIS", <g><circle cx="11.500" cy="11.500" r="8.800" fill="none" stroke="#85b52d" strokeWidth="5" /><path d="M14 14l9 9" stroke="#dcdcdc" strokeWidth="8" /><path d="M13.500 13.500H18l6 6V24h-4z" fill="#5f9430" /><path d="M10.500 9l5 2-1 4-3 1z" fill="#f0a01f" /></g>],
  ["Snipping Tool", <g><path d="M3.500 12.500v-9h9v5" fill="none" stroke="#d8401a" strokeWidth="3" strokeDasharray="2.500 1" /><path d="M3.500 12.500h5" stroke="#d8401a" strokeWidth="3" /><path d="M13.500 8v10M7 14.500h11" stroke="#8a8a8a" strokeWidth="2.600" /><circle cx="20.500" cy="13" r="2.300" fill="none" stroke="#1d9be0" strokeWidth="2" /><circle cx="13.500" cy="21" r="2.300" fill="none" stroke="#1d9be0" strokeWidth="2" /></g>],
];

/* ---------- tool bar contents ---------- */
const G1 = "page folder save printNew layouts styles | hand -panSel zoomIn zoomOut zoomFull -zoomSel zoomLayer -zoomNative zoomLast -zoomNext mapNew map3d bookNew book clock refresh | +identify abacus +gear sigma table ^ measure ^ tip -action ~";
const G2 = "dsManager gpkg vecNew feather chipNew meshNew vBox | pencils pencil -saveEdit -polyNew -vertex ~ -multiEdit -trash -cut -copy -paste -undo -redo | abcYellow abcPie / abcPin abcRed / -abcGrayPin -abcEye -abcMove -abcRot -abcEdit | globeFind | python | help |";
const TOOLS = (spec) =>
  spec.split(" ").map((t, i) => {
    if (t === "|") return <Grip key={i} />;
    if (t === "/") return <Sep key={i} />;
    if (t === "^" || t === "~") return <MenuBtn key={i} aria-label="▾" disabled={t === "~"}><Tri /></MenuBtn>;
    const off = t[0] === "-";
    const on = t[0] === "+";
    const name = off || on ? t.slice(1) : t;
    return <ToolBtn key={i} aria-label={name} disabled={off} $on={on}><Icon name={name} /></ToolBtn>;
  });

const BROWSER = [
  ["line", "pipelines"], ["points", "popp"], ["line", "railroads"], ["poly", "regions"], ["line", "rivers"],
  ["points", "storagep"], ["poly", "swamp"], ["line", "trails"], ["poly", "trees"], ["poly", "tundra"],
];
const LAYERS = [
  ["Deciduous", "box", "#f4a3b1", 0, 0], ["Mixed Trees", "box", "#e86f8d", 0, 0], ["railroads", "line", "#b29ad0", 0, 0],
  ["Uproszczona geometria", "box", "#8d5a99", 1, 1], ["Wierzchołki [7469]", "dot", "#6c9a6c", 1, 1], ["swamp", "box", "#85b66f", 1, 0],
  ["lokalizacja_hoteli(roznica)", "box", "#91522d", 1, 1], ["Bufo_liniekolejowe_9", "box", "#c43c39", 0, 1],
  ["Bufor_lotniska_9", "box", "#e15989", 0, 1], ["Wierzchołki [662]", "dot", "#987db7", 1, 1], ["Przecięcia [8]", "dot", "#b7484b", 1, 1],
  ["majrivers", "line", "#a67fb0", 1, 0], ["pop_bristol [11]", "dot", "#91522d", 0, 0], ["Bufor", "box", "#729b6f", 0, 1],
  ["rivers", "line", "#9fc48d", 1, 0], ["popp", "dot", "#e5b636", 0, 0], ["airports", "air", "", 0, 0], ["Długość linii", "box", "#b7484b", 0, 0],
];
const FUNCS = [
  "Data i czas", "Funkcje agregujące", "Geometria", "Kolor", "Konwersja", "Luźne dopasowywanie", "Mapy wartości", "Matematyczne",
  "Ogólne", "Operatory", "Ostatnio użyte (fieldcalc)", "Pliki i ścieżki", "Pola i wartości", "Rastry", "Tablice", "tekst",
  "Warstwy mapy", "Wiersz i atrubuty", "Wyrażenia warunkowe", "Zmienne",
];
const Symbol = ({ kind, color }) => {
  if (kind === "line") return <LineSym $c={color} />;
  if (kind === "dot") return <DotSym $c={color} />;
  if (kind === "air") return <Icon name="airport" />;
  return <Swatch $c={color} />;
};

const MapDrawing = () => {
  const discs = [[-14, 820], [113.5, 826.5], [173, 801], [264, 766], [897.5, 694], [935.5, 702.5]];
  return (
    <svg width="1215" height="866" viewBox="0 0 1215 866" aria-hidden="true">
      <path d="M213 789c-3-4-1-10 4-11 5 0 6-5 9-9l14-2 2 20-9-2c-6 0-5 6-11 7-3 1-7 0-9-3z" fill="#c9a032" stroke="#4a3b12" />
      {discs.map(([x, y], i) => <circle key={i} cx={x} cy={y} r="34.500" fill="#333" />)}
      {discs.map(([x, y], i) => <circle key={i} cx={x} cy={y} r="33.500" fill="#91522d" />)}
      <g fill="#c9a032" stroke="#4a3b12" strokeWidth=".9">
        <path d="M22 829l4-3 4 2-1 3h-5zM65 829l4-3 2 2-2 4-4-1zM53 829l3-1 1 2-3 1zM58 826l1-1 1 1zM206 799l2-4 4-3-3 5z" />
      </g>
      <g stroke="#57513a" strokeWidth="2" fill="none" strokeDasharray="3 1.500">
        <path d="M312 778c5-6 8-9 8-3M316 785l6-8M325 781c5 2 9 1 11 6M328 773l6 6M334 783l4 5M322 791l6 3M316 771l8 2M339 779v5M318 780l5 3" />
      </g>
    </svg>
  );
};

/* ---------- field calculator ---------- */
const Calculator = () => (
  <Win $x={311} $y={155} $w={768} aria-label="Kalkulator pól">
    <TitleBar $gap={5}>
      <Icon name="qgis" />
      <WinTitle>Uproszczona geometria — Kalkulator pól</WinTitle>
      <WinBtn $w={20} aria-label="×"><WinGlyph kind="close" /></WinBtn>
    </TitleBar>
    <DlgBody>
      <CheckLabel $off><Check disabled />Only update 0 selected feature(s)</CheckLabel>
      <Groups>
        <Group>
          <CheckLabel $bold $gap={5}><Check defaultChecked />Twórz nowe pole</CheckLabel>
          <GroupBox $pad="12px 5px 3px 4px">
            <CheckLabel><Check />Twórz pole wirtualne</CheckLabel>
            <FieldGrid>
              <FieldLabel htmlFor="fname">Nazwa</FieldLabel>
              <Wide><Frame $grow $dlg><Field id="fname" /></Frame></Wide>
              <FieldLabel htmlFor="ftype">Typ</FieldLabel>
              <Wide>
                <SelectBox $h={24}>
                  <Select id="ftype" $dlg $pad={23}><option>Liczba całkowita (integer)</option></Select>
                  <TypeMark>123</TypeMark>
                  <Tri />
                </SelectBox>
              </Wide>
              <FieldLabel htmlFor="flen">Długość pola wyjściowego</FieldLabel>
              <Spin id="flen" value="10" $h={20} $dlg upOff />
              <FieldLabel htmlFor="fprec" $pad={5}>Dokładność</FieldLabel>
              <Spin id="fprec" value="3" $h={20} $dlg $off upOff downOff />
            </FieldGrid>
          </GroupBox>
        </Group>
        <Group>
          <CheckLabel $bold $gap={5}><Check />Aktualizuj istniejące pole</CheckLabel>
          <GroupBox $pad="45px 5px 0 4px">
            <SelectBox $off $h={24}>
              <Select aria-label="Aktualizuj istniejące pole" disabled />
              <Tri />
            </SelectBox>
          </GroupBox>
        </Group>
      </Groups>
      <DlgTabs>
        <DlgTab $w={76} $on>Wyrażenie</DlgTab>
        <DlgTab $w={89}>Edytor funkcji</DlgTab>
      </DlgTabs>
      <TabPage>
        <Column>
          <Line $gap={2} $h={23}>
            {["page", "save", "-editDoc", "-trash", "download", "upload"].map((n) => (
              <Button key={n} $w={24} disabled={n[0] === "-"} aria-label={n}><Icon name={n.replace("-", "")} /></Button>
            ))}
          </Line>
          <CodeBox>sum<Bracket>(</Bracket>areakm2<Bracket>)</Bracket></CodeBox>
          <OpGrid>
            {["=", "+", "-", "/", "*", "^", "||", "(", ")", "'\\n'"].map((o) => <OpBtn key={o}>{o}</OpBtn>)}
          </OpGrid>
          <Line $gap={6} $h={23} $mt={8}>
            <FieldLabel htmlFor="feat">Obiekt</FieldLabel>
            <Combo id="feat" value="Marsh/Swamp" $grow $dlg />
            <Button $w={24} disabled aria-label="prev"><Icon name="prev" size={13} /></Button>
            <Button $w={24} aria-label="next"><Icon name="next" size={13} /></Button>
          </Line>
          <Line $gap={8} $h={15} $mt={5}><span>Podgląd:</span><output>24719,761</output></Line>
        </Column>
        <VSplit />
        <Column>
          <Line $gap={6} $h={23}>
            <SearchField $grow $dlg><Icon name="search" size={13} /><Field aria-label="Szukaj..." placeholder="Szukaj..." /></SearchField>
            <Button $w={80} disabled>Pokaż pomoc</Button>
          </Line>
          <FnList $grow>
            <Rows>
              <FnRow><FnName $bold>row_number</FnName></FnRow>
              {FUNCS.map((f) => <FnRow key={f}><Tri dir="right" /><FnName>{f}</FnName></FnRow>)}
            </Rows>
            <ScrollBar thumb={270} after={14} />
          </FnList>
        </Column>
        <VSplit />
        <HelpPane />
      </TabPage>
      <Notice>
        <svg width="32" height="34" viewBox="0 0 32 34" aria-hidden="true">
          <path d="M17 3a13 12 0 0 1 3 24v6l-6-6" fill="#808080" transform="translate(2 1)" />
          <path d="M16 .8c8.500 0 15 5.200 15 12.200 0 6-4.500 10.500-11 11.800V31l-6-6C6.500 24.500 1 19.500 1 13 1 6 7.500.8 16 .8z" fill="#fff" stroke="#000" strokeDasharray="4 .5" />
          <circle cx="16" cy="6" r="2.500" fill="#00f" />
          <path d="M12 10.500h6v9h2v2h-8v-2h2v-7h-2z" fill="#00f" />
        </svg>
        <NoticeText>
          Edytujesz informacje w tej warstwie, ale nie znajduje się ona w trybie edycji. Jeśli klikniesz OK, zostanie automatycznie włączony tryb edycji.
        </NoticeText>
      </Notice>
      <DlgButtons>
        <Button $w={80} disabled>OK</Button>
        <Button $w={80}>Anuluj</Button>
        <Button $w={80}>Pomoc</Button>
      </DlgButtons>
    </DlgBody>
  </Win>
);

const MiniBtn = styled.button`
  display: grid;
  place-items: center;
  border: 0;
  background: none;
  width: ${(p) => p.$w}px;
`;
const Mini = ({ x }) => (
  <MiniWin $x={x}>
    <Icon name="qgis" />
    <MiniBtn $w={11} aria-label="⧉"><WinGlyph kind="restore" /></MiniBtn>
    <MiniBtn $w={78} aria-label="□"><WinGlyph kind="max" /></MiniBtn>
    <MiniBtn $w={14} aria-label="×"><WinGlyph kind="close" /></MiniBtn>
  </MiniWin>
);

export default function App() {
  return (
    <>
      <Global />
      <Desktop>
        <ToolRow $h={27} $pb={4}><Grip $first />{TOOLS(G1)}</ToolRow>
        <ToolRow $h={31}><Grip $first />{TOOLS(G2)}</ToolRow>
        <ToolRow $h={30}>
          <Grip $first />
          {TOOLS("selArea ^ selForm ^ deselect ^ selPin | scpBand scpZoom")}
          <DarkToggle $w={59}>RGB =</DarkToggle>
          <Combo $w={79} label="RGB" value="-" />
          {TOOLS("curvePct curveSig scpZoomPlus")}
          <DarkToggle $w={42}>OT</DarkToggle>
          {TOOLS("roiPoly roiPlus redoBox")}
          <DarkLabel htmlFor="odl" $w={24}>Odl.</DarkLabel>
          <Spin id="odl" $w={100} value="0,010000" />
          <DarkLabel htmlFor="min" $w={23}>Min</DarkLabel>
          <Spin id="min" $w={60} value="60" />
          <DarkLabel htmlFor="max" $w={27}>Max</DarkLabel>
          <Spin id="max" $w={60} value="100" />
          {TOOLS("pvZoom")}
          <DarkToggle $w={63}>Podgląd</DarkToggle>
          {TOOLS("pvCross redoBox")}
          <DarkLabel htmlFor="tval" $w={10}>T</DarkLabel>
          <Spin id="tval" $w={50} value="0" downOff />
          <DarkLabel htmlFor="sval" $w={10}>S</DarkLabel>
          <Spin id="sval" $w={60} value="200" />
          {TOOLS("bin kml | roiGrid")}
          <Spin $w={60} label="0" value="0" />
          {TOOLS("goBox")}
          <Spin $w={60} label="1" value="1" />
          {TOOLS("goBox")}
          <Spin $w={60} label="2" value="2" />
          {TOOLS("goBox mosaic | -dig1 -dig2 ~ -dig3 -dig4 ~ | annText ^ annSel annPoly annLine annStar annT / annBubble ^")}
        </ToolRow>

        <Workspace>
          <LeftCol>
            <DockHeader title="Przeglądarka" />
            <DockTools>{TOOLS("addLayer refresh filter collapse info")}</DockTools>
            <ListBox>
              <Rows>
                {BROWSER.map(([icon, name]) => (
                  <TreeRow key={name} $indent={52} $sel={name === "swamp"} $w="179px">
                    <Tri dir="right" /><Icon name={icon} /><RowText>{name}</RowText>
                  </TreeRow>
                ))}
                <TreeRow $indent={19}><Icon name="sap" /><RowText>SAP HANA</RowText></TreeRow>
              </Rows>
              <ScrollBar before={76} thumb={52} after={43} />
            </ListBox>
            <HSplit />
            <DockHeader title="Wynik identyfikacji" />
            <DockTools>{TOOLS("-formView / expand collapse expandNew / deselect / -copy -print /")}<More>»</More></DockTools>
            <ListBox $min={95}>
              <IdTable>
                <colgroup><col width="57%" /><col /></colgroup>
                <thead><tr><th scope="col">Obiekt</th><th scope="col">Wartość</th></tr></thead>
              </IdTable>
            </ListBox>
            <FormRow $pad="5px 5px 0 5px">
              <label htmlFor="mode">Tryb</label>
              <SelectBox $h={24} $caret={7}><Select id="mode"><option>bieżąca warstwa</option></Select><Tri /></SelectBox>
            </FormRow>
            <FormRow $pad="8px 5px 8px 5px" $off>
              <label htmlFor="view">Widok</label>
              <SelectBox $w={72} $h={22} $off><Select id="view" disabled><option>Drzewo</option></Select><Tri /></SelectBox>
            </FormRow>
            <HSplit />
            <DockHeader title="Warstwy" />
            <DockTools>{TOOLS("brush addGroup eye filterMenu epsilon ^ expand collapse removeLayer")}</DockTools>
            <ListBox $grow>
              <Rows>
                {LAYERS.map(([name, kind, color, on, chip], i) => (
                  <LayerRow key={name} $sel={i === 3}>
                    <Check id={`layer${i}`} defaultChecked={!!on} />
                    <Symbol kind={kind} color={color} />
                    <LayerName htmlFor={`layer${i}`} $on={on} $u={i === 3}>{name}</LayerName>
                    {chip ? <ChipBtn aria-label="chip"><Icon name="chip" size={14} /></ChipBtn> : null}
                  </LayerRow>
                ))}
              </Rows>
              <ScrollBar thumb={231} after={58} />
            </ListBox>
            <TabBar>
              <DockTab $w={68} $on>Warstwy</DockTab>
              <DockTab $w={94}>Edytor węzłów</DockTab>
            </TabBar>
          </LeftCol>
          <VSplit $w={6} />
          <MapArea><MapDrawing /></MapArea>
          <VSplit $w={6} />
          <RightCol>
            <DockHeader title="Algorytmy Processingu" />
            <DockTools>{TOOLS("models pyMenu clock +doc / editNote / wrench")}</DockTools>
            <SearchBar>
              <Icon name="search" size={14} />
              <Field aria-label="Szukaj" defaultValue="upro" />
              <ClearBtn aria-label="×">×</ClearBtn>
            </SearchBar>
            <ListBox $min={142}>
              <Rows>
                <TreeRow $indent={6}><Tri dir="right" /><Icon name="clock" /><RowText>Ostatnio używane</RowText></TreeRow>
                <TreeRow $indent={6}><Tri /><Icon name="qgis" /><RowText>Wektor - geometria</RowText></TreeRow>
                <TreeRow $indent={43} $sel><Icon name="simplify" /><RowText>Uprość geometrię</RowText></TreeRow>
              </Rows>
            </ListBox>
            <HSplit />
            <DockHeader title="Podgląd wyników" />
            <ListBox $grow />
            <HSplit />
            <ListBox $grow />
          </RightCol>
        </Workspace>

        <StatusBar>
          <LocatorBox />
          <StatusMsg>edycji aktywnej warstwy</StatusMsg>
          <StatusItem>
            <label htmlFor="coord">Współrzędne</label>
            <Frame $w={104} $dlg><Field id="coord" defaultValue="-3905771 6861229" /></Frame>
            <Icon name="extents" />
          </StatusItem>
          <StatusItem $before={10} $gap={3}><label htmlFor="scale">Skala</label><Combo id="scale" $w={81} value="1:11040080" tight $dlg /></StatusItem>
          <StatusItem $before={8}><PlainBtn aria-label="lock"><Icon name="lock" /></PlainBtn></StatusItem>
          <StatusItem $before={5} $gap={3}><label htmlFor="zoom">Powiększenie</label><Spin id="zoom" $w={83} value="100%" $dlg /></StatusItem>
          <StatusItem><label htmlFor="rot">Kąt obrotu</label></StatusItem>
          <StatusItem $before={10}><Spin id="rot" $w={83} value="0,0 °" $dlg /></StatusItem>
          <StatusItem $before={7}><CheckLabel $gap={5}><Check defaultChecked />Renderuj</CheckLabel></StatusItem>
          <StatusItem $before={15}><PlainBtn><Icon name="globe" size={15} />EPSG:2964</PlainBtn></StatusItem>
          <StatusItem $before={22}><PlainBtn aria-label="messages"><Icon name="bubble" /></PlainBtn></StatusItem>
        </StatusBar>

        <TaskBar>
          <Apps>
            {APPS.map(([name, art], i) => (
              <AppBtn key={name} aria-label={name} $idle={i === 0} $on={i === APPS.length - 1}>
                <svg width="24" height="24" viewBox="0 0 24 24" overflow="visible" aria-hidden="true">{art}</svg>
              </AppBtn>
            ))}
          </Apps>
          <Tray>
            <svg width="12" height="8" viewBox="0 0 12 8" fill="none" stroke="currentColor" strokeWidth="1.300"><path d="M1 7l5-5 5 5" /></svg>
            <svg width="17" height="14" viewBox="0 0 17 14" fill="none" stroke="currentColor" strokeWidth="1.300"><path d="M1 5.500c4-5 11-5 15 0M3.500 8c3-3.500 7-3.500 10 0M6 10.500c1.500-1.600 3.500-1.600 5 0" /><circle cx="8.500" cy="12.500" r="1" fill="currentColor" stroke="none" /></svg>
            <svg width="17" height="14" viewBox="0 0 17 14" fill="none" stroke="currentColor"><path d="M1 5v4h2l4 3.500v-11L3 5zM11 5l4 4M15 5l-4 4" /></svg>
            <svg width="17" height="12" viewBox="0 0 17 12" fill="none" stroke="currentColor" strokeWidth="1.200"><rect x="1" y="1" width="13" height="10" rx="1.500" /><path d="M16 4v4" /><rect x="3" y="3" width="4" height="6" fill="currentColor" stroke="none" /></svg>
            <Clock>19:48<br />06.11.2022</Clock>
            <svg width="14" height="16" viewBox="0 0 14 16" fill="none" stroke="currentColor" strokeWidth="1.200"><path d="M7 1c6 2 7 10 1 13-3 1-6 0-7-1 5 0 8-6 6-12z" /></svg>
          </Tray>
        </TaskBar>

        <Win $x={311} $y={123} $w={1055} $h={669} aria-label="Uproszczona geometria">
          <TitleBar $gap={8}>
            <Icon name="qgis" />
            <WinTitle>Uproszczona geometria — Features Total: 69, Filtered: 69, Selected: 0</WinTitle>
            <WinBtn $w={33} aria-label="_"><WinGlyph kind="min" /></WinBtn>
            <WinBtn $w={42} aria-label="□"><WinGlyph kind="max" /></WinBtn>
            <WinBtn $w={33} aria-label="×"><WinGlyph kind="close" /></WinBtn>
          </TitleBar>
          <AttrTools />
          <AttrBody><AttrCells /><ScrollBar thumb={142} after={405} /></AttrBody>
          <AttrFoot>
            <ToolBtn aria-label="form"><Icon name="form" /></ToolBtn>
            <ToolBtn $on aria-label="table"><Icon name="table" /></ToolBtn>
          </AttrFoot>
        </Win>
        <Calculator />
        <Mini x={7} />
        <Mini x={168} />
      </Desktop>
    </>
  );
}
